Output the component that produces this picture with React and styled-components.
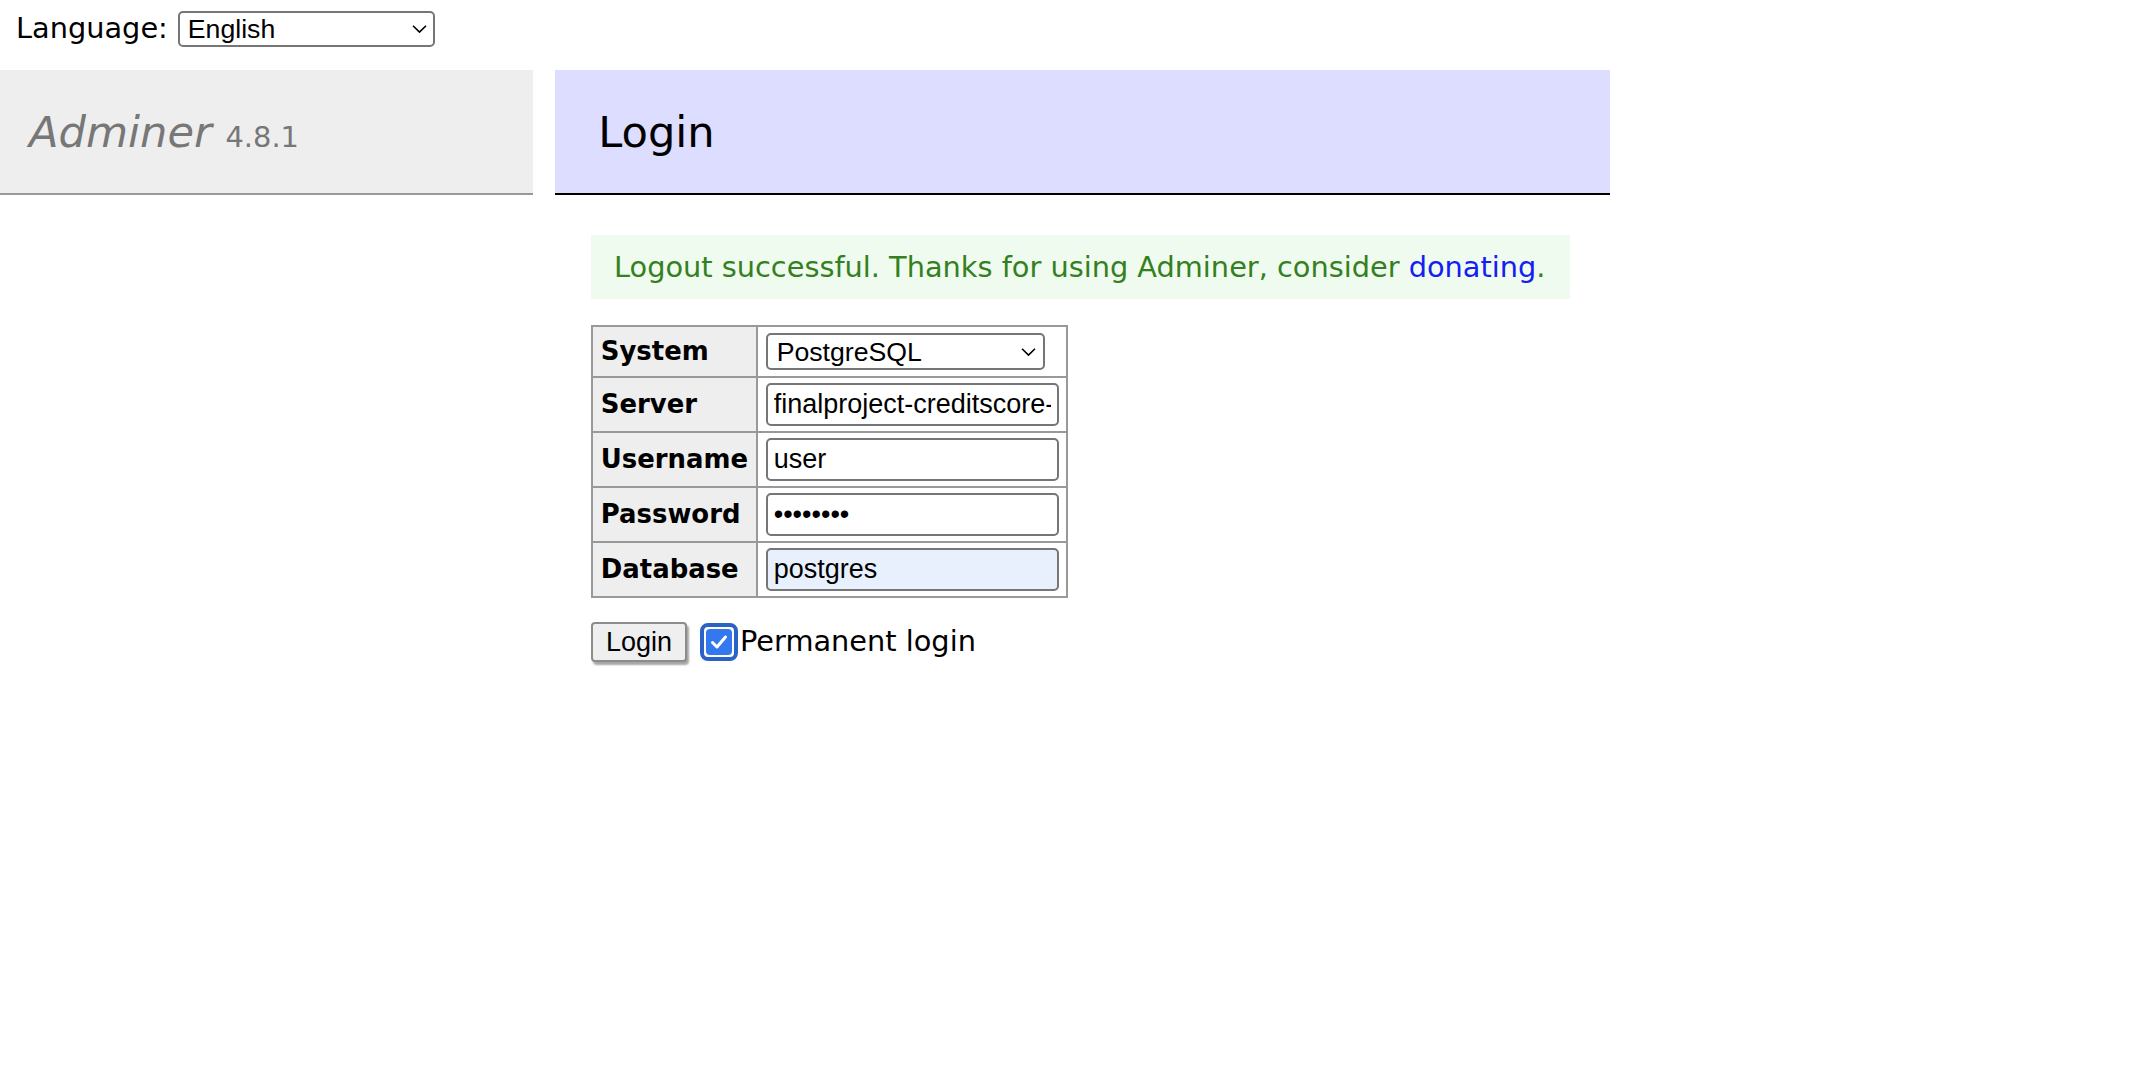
import React from 'react';
import styled, { createGlobalStyle } from 'styled-components';

const GlobalStyle = createGlobalStyle`
  html, body {
    margin: 0;
    padding: 0;
    background: #fff;
  }
  body {
    color: #000;
    font: 28.8px/1.25 "DejaVu Sans", Verdana, sans-serif;
  }
`;

const LangBar = styled.form`
  display: flex;
  align-items: center;
  gap: 10px;
  height: 58px;
  margin: 0 0 12px;
  padding: 0 16px;
`;

const SelectWrap = styled.span`
  position: relative;
  display: inline-block;
  width: ${(p) => p.$w}px;
  margin: ${(p) => p.$m || '0'};
`;

const Select = styled.select`
  appearance: none;
  display: block;
  box-sizing: border-box;
  width: 100%;
  height: ${(p) => p.$h}px;
  margin: 0;
  padding: 0 36px 0 ${(p) => p.$pl}px;
  border: 2px solid #767676;
  border-radius: 5px;
  background: #fff;
  color: #000;
  font: 26.67px "Liberation Sans", Arial, sans-serif;
`;

const Chevron = styled.svg`
  position: absolute;
  right: ${(p) => p.$r}px;
  top: 50%;
  width: 15px;
  height: 9px;
  transform: translateY(-50%);
  pointer-events: none;
`;

const Main = styled.div`
  display: flex;
  align-items: flex-start;
  gap: 22px;
`;

const Menu = styled.div`
  flex: none;
  width: 533px;
`;

const Brand = styled.h1`
  margin: 0;
  padding: 34.56px 29px;
  font-size: 43.2px;
  line-height: 54px;
  font-weight: normal;
  color: #777;
  background: #eee;
  border-bottom: 2px solid #999;
`;

const BrandLink = styled.a`
  color: #777;
  font-style: italic;
  text-decoration: none;
`;

const Version = styled.span`
  color: #777;
  font-size: 28.9px;
  line-height: 1;
`;

const Content = styled.div`
  width: 1055px;
  padding-bottom: 40px;
`;

const Title = styled.h2`
  margin: 0 0 40px;
  padding: 34.56px 43.2px;
  font-size: 43.2px;
  line-height: 54px;
  font-weight: normal;
  color: #000;
  background: #ddf;
  border-bottom: 2px solid #000;
`;

const Body = styled.div`
  padding-left: 36px;
`;

const Message = styled.div`
  margin: 0 40px 0 0;
  padding: 14px 23px;
  line-height: 36px;
  color: #348021;
  background: #effbee;
`;

const Link = styled.a`
  color: #1420f2;
  text-decoration: none;
`;

const LoginTable = styled.table`
  margin-top: 26px;
  border-collapse: collapse;
  font-size: 25.92px;
  line-height: 32.4px;
`;

const Th = styled.th`
  border: 2px solid #999;
  padding: 5px 7.8px;
  background: #eee;
  text-align: left;
  font-weight: bold;
`;

const Td = styled.td`
  border: 2px solid #999;
  padding: 5px 7.8px;
`;

const Input = styled.input`
  display: block;
  box-sizing: border-box;
  width: 293px;
  height: 43px;
  margin: 0;
  padding: 0 6px;
  border: 2px solid #767676;
  border-radius: 5px;
  color: #000;
  background: ${(p) => (p.$filled ? '#e8f0fe' : '#fff')};
  font: 27px "Liberation Sans", Arial, sans-serif;
`;

const Actions = styled.p`
  display: flex;
  align-items: center;
  margin: 24px 0 0;
`;

const Button = styled.button`
  box-sizing: border-box;
  width: 96px;
  height: 40px;
  margin-right: 13px;
  padding: 0;
  border: 2px solid #8c8c8c;
  border-radius: 4px;
  background: #efefef;
  box-shadow: 2px 3px 2px rgba(0, 0, 0, 0.35);
  color: #000;
  font: 27px "Liberation Sans", Arial, sans-serif;
`;

const CheckLabel = styled.label`
  display: flex;
  align-items: center;
  gap: 2px;
`;

const CheckBox = styled.span`
  box-sizing: border-box;
  display: flex;
  width: 38px;
  height: 38px;
  padding: 2px;
  border: 4px solid #2b62c8;
  border-radius: 8px;
  background: #fff;
`;

const CheckFill = styled.span`
  flex: 1;
  display: flex;
  align-items: center;
  justify-content: center;
  border-radius: 4px;
  background: #3478f0;
`;

function ChevronIcon({ right }) {
  return (
    <Chevron $r={right} viewBox="0 0 15 9">
      <path d="M1 1.2 L7.5 7.6 L14 1.2" fill="none" stroke="#000" strokeWidth="1.6" />
    </Chevron>
  );
}

export default function App() {
  return (
    <>
      <GlobalStyle />
      <LangBar>
        <span>Language:</span>
        <SelectWrap $w={257}>
          <Select $h={36} $pl={8} defaultValue="en">
            <option value="en">English</option>
          </Select>
          <ChevronIcon right={8} />
        </SelectWrap>
      </LangBar>
      <Main>
        <Menu>
          <Brand>
            <BrandLink href="#">Adminer</BrandLink> <Version>4.8.1</Version>
          </Brand>
        </Menu>
        <Content>
          <Title>Login</Title>
          <Body>
            <Message>
              Logout successful. Thanks for using Adminer, consider <Link href="#">donating</Link>.
            </Message>
            <LoginTable>
              <tbody>
                <tr>
                  <Th>System</Th>
                  <Td>
                    <SelectWrap $w={279} $m="1px 0">
                      <Select $h={37} $pl={9} defaultValue="pgsql">
                        <option value="pgsql">PostgreSQL</option>
                      </Select>
                      <ChevronIcon right={9} />
                    </SelectWrap>
                  </Td>
                </tr>
                <tr>
                  <Th>Server</Th>
                  <Td>
                    <Input defaultValue="finalproject-creditscore-db-1" />
                  </Td>
                </tr>
                <tr>
                  <Th>Username</Th>
                  <Td>
                    <Input defaultValue="user" />
                  </Td>
                </tr>
                <tr>
                  <Th>Password</Th>
                  <Td>
                    <Input type="password" defaultValue="password" />
                  </Td>
                </tr>
                <tr>
                  <Th>Database</Th>
                  <Td>
                    <Input $filled defaultValue="postgres" />
                  </Td>
                </tr>
              </tbody>
            </LoginTable>
            <Actions>
              <Button type="button">Login</Button>
              <CheckLabel>
                <CheckBox>
                  <CheckFill>
                    <svg width="18" height="16" viewBox="0 0 18 16">
                      <path d="M2.5 8.5 L7 13 L15.5 3" fill="none" stroke="#fff" strokeWidth="3" strokeLinecap="round" strokeLinejoin="round" />
                    </svg>
                  </CheckFill>
                </CheckBox>
                Permanent login
              </CheckLabel>
            </Actions>
          </Body>
        </Content>
      </Main>
    </>
  );
}
